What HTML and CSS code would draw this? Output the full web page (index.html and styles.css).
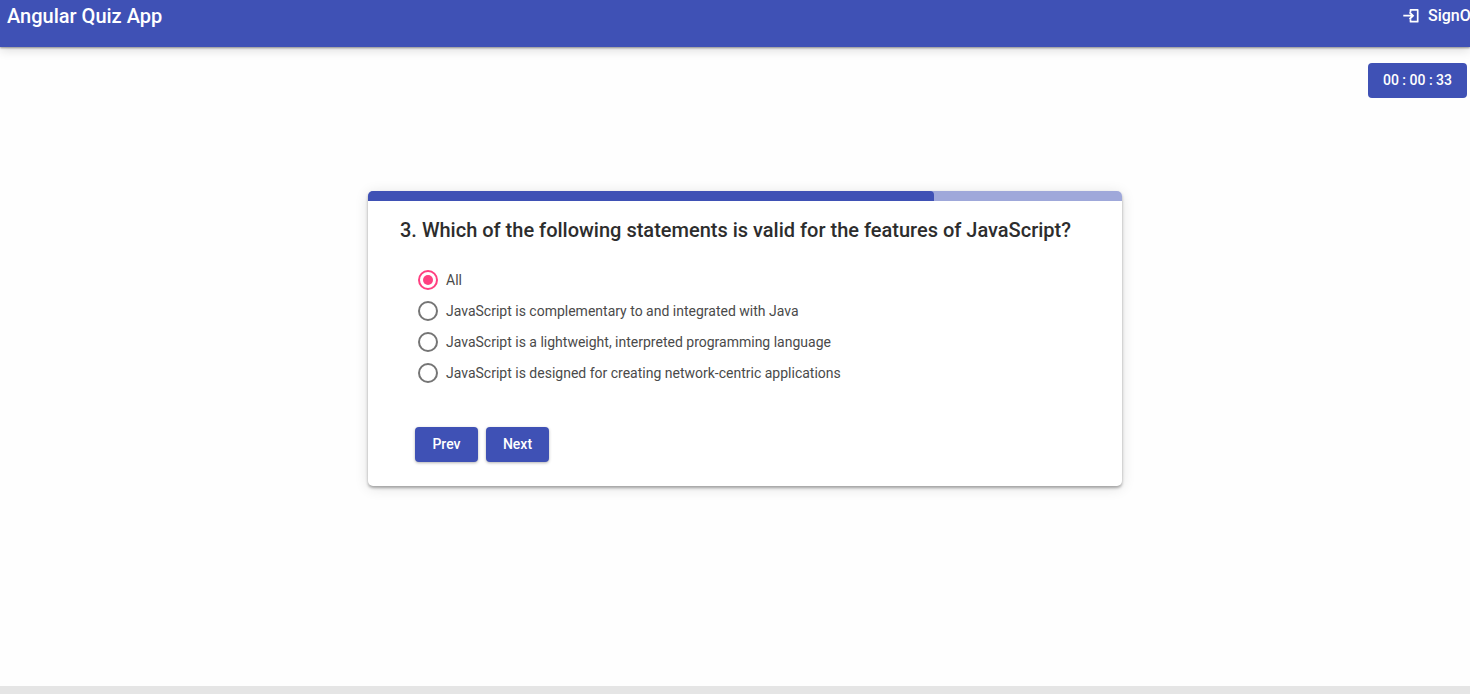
FILE: index.html
```html
<!DOCTYPE html>
<html lang="en">
<head>
<meta charset="utf-8">
<title>Angular Quiz App</title>
<link rel="stylesheet" href="styles.css">
</head>
<body>
<header class="toolbar">
  <h1 class="brand">Angular Quiz App</h1>
  <button class="signout" type="button">
    <svg class="signout-icon" viewBox="0 0 17 16" aria-hidden="true">
      <path d="M7.500 4.200V1.800H14.700V13.700H7.500V11.300" fill="none" stroke="currentColor" stroke-width="1.700" stroke-linejoin="round"/>
      <path d="M0.300 6.800H7.800L5.900 4.900L7.200 3.700L11.300 7.700L7.200 11.700L5.900 10.500L7.800 8.600H0.300Z" fill="currentColor"/>
    </svg>
    <span>SignOut</span>
  </button>
</header>
<main class="page">
  <button class="btn timer" type="button">00 : 00 : 33</button>
  <form class="card">
    <div class="progress" role="progressbar" aria-label="Quiz progress" aria-valuenow="75" aria-valuemin="0" aria-valuemax="100">
      <div class="progress-fill" style="width: 75%"></div>
    </div>
    <h2 class="question" id="question">3. Which of the following statements is valid for the features of JavaScript?</h2>
    <div class="options" role="radiogroup" aria-labelledby="question">
      <label class="option"><input class="radio" type="radio" name="answer" checked><span>All</span></label>
      <label class="option"><input class="radio" type="radio" name="answer"><span>JavaScript is complementary to and integrated with Java</span></label>
      <label class="option"><input class="radio" type="radio" name="answer"><span>JavaScript is a lightweight, interpreted programming language</span></label>
      <label class="option"><input class="radio" type="radio" name="answer"><span>JavaScript is designed for creating network-centric applications</span></label>
    </div>
    <div class="actions">
      <button class="btn" type="button">Prev</button>
      <button class="btn" type="button">Next</button>
    </div>
  </form>
</main>
<footer class="footer"></footer>
</body>
</html>
```
FILE: styles.css
```css
* {
  box-sizing: border-box;
}

body {
  margin: 0;
  min-height: 100vh;
  display: flex;
  flex-direction: column;
  overflow-x: hidden;
  background: #fefefe;
  color: #2d2d2d;
  font-family: Roboto, "Liberation Sans", sans-serif;
}

.toolbar {
  display: flex;
  justify-content: space-between;
  align-items: flex-start;
  padding: 4px 0 19px 7px;
  background: #3f51b5;
  color: #fff;
  box-shadow: 0 1px 2px rgba(0, 0, 0, 0.4), 0 3px 10px rgba(0, 0, 0, 0.14);
}

.brand {
  margin: 0;
  font-size: 20px;
  line-height: 24px;
  font-weight: 500;
}

.signout {
  display: flex;
  align-items: center;
  gap: 8px;
  margin-right: -15px;
  padding: 0;
  border: 0;
  background: none;
  color: inherit;
  font: 500 16px/24px Roboto, "Liberation Sans", sans-serif;
}

.signout-icon {
  width: 17px;
  height: 16px;
}

.page {
  flex: 1;
  display: flex;
  flex-direction: column;
  align-items: center;
  padding: 16px 0 32px 20px;
}

.btn {
  min-width: 63px;
  height: 35px;
  padding: 0 15px;
  border: 0;
  border-radius: 4px;
  background: #3f51b5;
  color: #fff;
  font: 500 14px/35px Roboto, "Liberation Sans", sans-serif;
  box-shadow: 0 1px 3px rgba(0, 0, 0, 0.3);
}

.timer {
  align-self: flex-end;
  min-width: 99px;
  margin-right: 3px;
  box-shadow: none;
}

.card {
  width: 52%;
  min-width: 320px;
  margin-top: 93px;
  padding-bottom: 24px;
  border-radius: 5px;
  background: #fff;
  box-shadow: 0 2px 3px rgba(0, 0, 0, 0.32), 0 2px 14px rgba(0, 0, 0, 0.12);
}

.progress {
  height: 10px;
  overflow: hidden;
  border-radius: 5px 5px 0 0;
  background: #9fa8da;
}

.progress-fill {
  height: 100%;
  border-top-right-radius: 4px;
  background: #3f51b5;
}

.question {
  margin: 17px 32px 26px;
  font-size: 20px;
  line-height: 24px;
  font-weight: 500;
}

.options {
  display: grid;
  gap: 7px;
  margin: 0 32px 0 50px;
}

.option {
  display: flex;
  align-items: center;
  gap: 8px;
  color: #4a4a4a;
  font-size: 14px;
  line-height: 24px;
}

.radio {
  appearance: none;
  display: grid;
  place-items: center;
  flex: none;
  width: 20px;
  height: 20px;
  margin: 0;
  border: 2px solid #757575;
  border-radius: 50%;
}

.radio:checked {
  border-color: #ff4081;
}

.radio:checked::before {
  content: "";
  width: 10px;
  height: 10px;
  border-radius: 50%;
  background: #ff4081;
}

.actions {
  display: flex;
  gap: 8px;
  margin: 42px 32px 0 47px;
}

.footer {
  height: 8px;
  background: #e5e5e5;
}
```
